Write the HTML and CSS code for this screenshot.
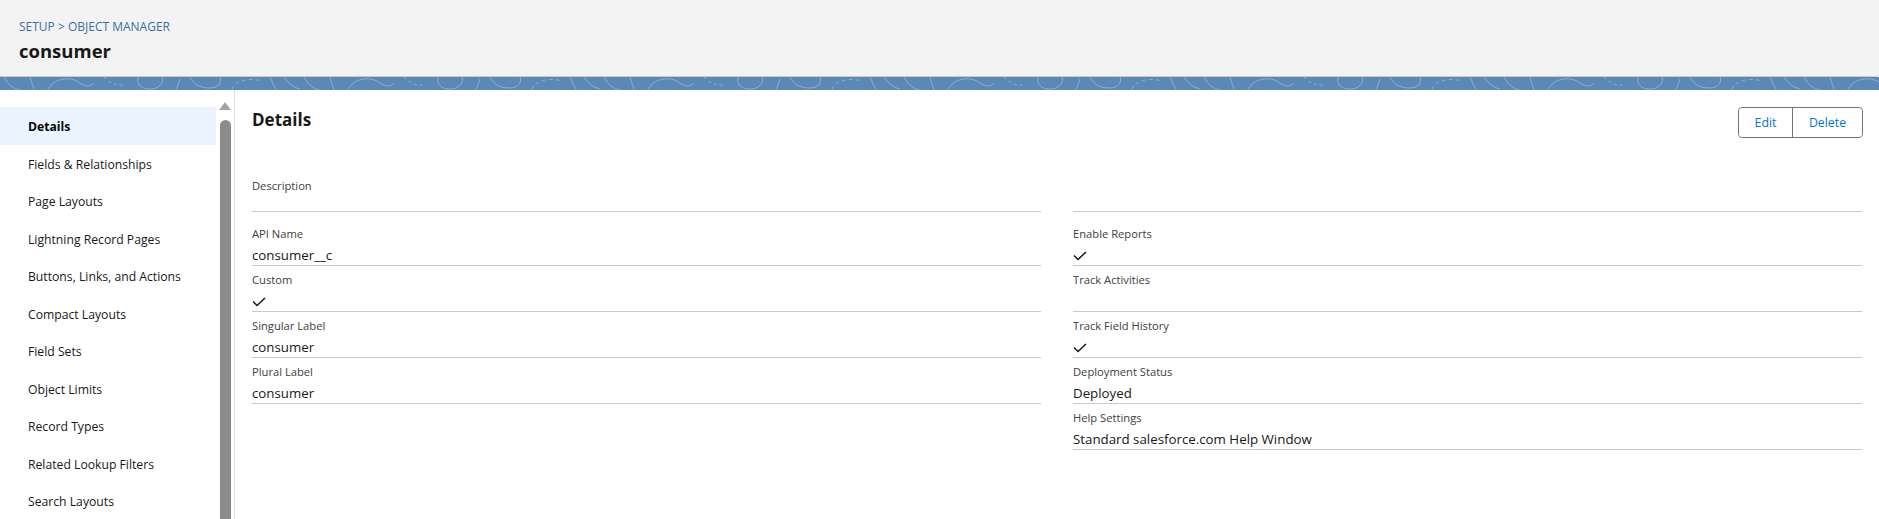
FILE: index.html
```html
<!DOCTYPE html>
<html lang="en">
<head>
<meta charset="utf-8">
<title>consumer | Object Manager</title>
<link rel="stylesheet" href="styles.css">
</head>
<body>
<header class="page-header">
  <div class="breadcrumb">SETUP &gt; OBJECT MANAGER</div>
  <h1 class="title">consumer</h1>
</header>
<div class="band">
  <svg class="band-art" width="100%" height="13" xmlns="http://www.w3.org/2000/svg">
    <defs>
      <pattern id="swirl" width="300" height="13" patternUnits="userSpaceOnUse">
        <rect width="300" height="13" fill="#5a88b8"/>
        <g fill="none" stroke="rgba(255,255,255,0.3)" stroke-width="1">
          <path d="M4 0 C 8 8, 14 12, 20 13"/>
          <path d="M30 0 L 34 13"/>
          <path d="M48 13 C 52 2, 70 -2, 80 6 C 86 10, 90 10, 94 6"/>
          <path d="M104 0 C 110 6, 116 9, 124 8" stroke-dasharray="3 3"/>
          <path d="M138 0 C 136 9, 144 13, 152 12 C 160 11, 164 5, 162 0"/>
          <path d="M176 13 L 180 2"/>
          <path d="M190 0 C 194 8, 200 11, 210 11 C 218 11, 222 6, 220 0"/>
          <path d="M232 13 C 234 4, 248 0, 262 4" stroke-dasharray="4 3"/>
          <path d="M270 0 L 276 13"/>
          <path d="M284 0 C 288 6, 292 10, 300 12"/>
        </g>
      </pattern>
    </defs>
    <rect width="100%" height="13" fill="url(#swirl)"/>
  </svg>
</div>
<div class="layout">
  <nav class="sidenav">
    <ul class="nav-list">
      <li class="nav-item active">Details</li>
      <li class="nav-item">Fields &amp; Relationships</li>
      <li class="nav-item">Page Layouts</li>
      <li class="nav-item">Lightning Record Pages</li>
      <li class="nav-item">Buttons, Links, and Actions</li>
      <li class="nav-item">Compact Layouts</li>
      <li class="nav-item">Field Sets</li>
      <li class="nav-item">Object Limits</li>
      <li class="nav-item">Record Types</li>
      <li class="nav-item">Related Lookup Filters</li>
      <li class="nav-item">Search Layouts</li>
    </ul>
    <div class="scrollbar">
      <div class="scroll-arrow"></div>
      <div class="scroll-thumb"></div>
    </div>
  </nav>
  <main class="content">
    <div class="content-head">
      <h2 class="section-title">Details</h2>
      <div class="btn-group">
        <button class="btn btn-edit" type="button">Edit</button>
        <button class="btn btn-delete" type="button">Delete</button>
      </div>
    </div>
    <div class="desc-row">
      <div class="field field-desc">
        <div class="field-label">Description</div>
        <div class="field-value"></div>
      </div>
      <div class="field field-desc"></div>
    </div>
    <div class="fields-grid">
      <div class="col">
        <div class="field">
          <div class="field-label">API Name</div>
          <div class="field-value">consumer__c</div>
        </div>
        <div class="field">
          <div class="field-label">Custom</div>
          <div class="field-value"><svg class="check" width="14" height="10" viewBox="0 0 14 10"><polyline points="1,4.5 5,8.5 13,1" fill="none" stroke="#181818" stroke-width="1.5"/></svg></div>
        </div>
        <div class="field">
          <div class="field-label">Singular Label</div>
          <div class="field-value">consumer</div>
        </div>
        <div class="field">
          <div class="field-label">Plural Label</div>
          <div class="field-value">consumer</div>
        </div>
      </div>
      <div class="col">
        <div class="field">
          <div class="field-label">Enable Reports</div>
          <div class="field-value"><svg class="check" width="14" height="10" viewBox="0 0 14 10"><polyline points="1,4.5 5,8.5 13,1" fill="none" stroke="#181818" stroke-width="1.5"/></svg></div>
        </div>
        <div class="field">
          <div class="field-label">Track Activities</div>
          <div class="field-value"></div>
        </div>
        <div class="field">
          <div class="field-label">Track Field History</div>
          <div class="field-value"><svg class="check" width="14" height="10" viewBox="0 0 14 10"><polyline points="1,4.5 5,8.5 13,1" fill="none" stroke="#181818" stroke-width="1.5"/></svg></div>
        </div>
        <div class="field">
          <div class="field-label">Deployment Status</div>
          <div class="field-value">Deployed</div>
        </div>
        <div class="field">
          <div class="field-label">Help Settings</div>
          <div class="field-value">Standard salesforce.com Help Window</div>
        </div>
      </div>
    </div>
  </main>
</div>
</body>
</html>
```

FILE: styles.css
```css
* { box-sizing: border-box; }

html, body {
  margin: 0;
  padding: 0;
  height: 100%;
  overflow: hidden;
  background: #ffffff;
  font-family: "Open Sans", "Noto Sans", Arial, sans-serif;
  color: #181818;
}

.page-header {
  height: 77px;
  background: #f3f3f3;
  border-bottom: 1px solid #c9c9c9;
  border-bottom-right-radius: 4px;
  padding: 19px 0 0 19px;
}

.breadcrumb {
  font-size: 12px;
  line-height: 16px;
  color: #3d6fa3;
}

.title {
  margin: 3px 0 0;
  font-size: 18.5px;
  line-height: 26px;
  font-weight: 700;
  color: #181818;
}

.band {
  height: 13px;
  line-height: 0;
  background: #5a88b8;
}

.band-art { display: block; }

.layout {
  display: flex;
  height: calc(100vh - 90px);
}

.sidenav {
  display: flex;
  width: 235px;
  flex: none;
  border-right: 1px solid #e1e1e1;
}

.nav-list {
  list-style: none;
  margin: 0;
  padding: 17px 0 0;
  width: 216px;
  flex: none;
}

.nav-item {
  height: 37.5px;
  padding-top: 2px;
  line-height: 35.5px;
  padding-left: 28px;
  font-size: 12.2px;
  color: #181818;
  white-space: nowrap;
}

.nav-item.active {
  background: #ebf3fe;
  font-weight: 700;
  color: #080707;
}

.scrollbar {
  width: 18px;
  flex: none;
  display: flex;
  flex-direction: column;
  padding-left: 3px;
}

.scroll-arrow {
  width: 0;
  height: 0;
  margin-top: 12px;
  border-left: 6.5px solid transparent;
  border-right: 6.5px solid transparent;
  border-bottom: 8px solid #a3a3a3;
}

.scroll-thumb {
  margin-top: 10px;
  margin-left: 1px;
  width: 11px;
  flex: 1;
  background: #8b8b8b;
  border-radius: 6px 6px 0 0;
}

.content {
  flex: 1;
  padding: 17px 17px 0 17px;
  min-width: 0;
}

.content-head {
  display: flex;
  justify-content: space-between;
  align-items: flex-start;
  height: 31px;
}

.section-title {
  margin: 0;
  font-size: 17px;
  line-height: 26px;
  font-weight: 700;
  color: #181818;
}

.btn-group {
  display: flex;
  border: 1px solid #747474;
  border-radius: 4px;
  height: 31px;
  margin-right: -1px;
}

.btn {
  background: #ffffff;
  border: 0;
  margin: 0;
  padding: 0;
  height: 29px;
  font-family: inherit;
  font-size: 12.3px;
  color: #0176d3;
  cursor: pointer;
}

.btn-edit {
  width: 54px;
  border-right: 1px solid #747474;
  border-radius: 4px 0 0 4px;
}

.btn-delete {
  width: 69px;
  border-radius: 0 4px 4px 0;
}

.desc-row {
  display: grid;
  grid-template-columns: 1fr 1fr;
  column-gap: 32px;
  margin-top: 34px;
}

.fields-grid {
  display: grid;
  grid-template-columns: 1fr 1fr;
  column-gap: 32px;
  margin-top: 8px;
  align-items: start;
}

.field {
  height: 46px;
  padding-top: 5px;
  border-bottom: 1px solid #c9c9c9;
}

.field-desc {
  height: 40px;
}

.field-label {
  font-size: 11.2px;
  line-height: 18px;
  color: #3e3e3c;
}

.field-value {
  margin-top: 2px;
  height: 21px;
  font-size: 13.3px;
  line-height: 21px;
  color: #181818;
  display: flex;
  align-items: center;
}

.check {
  display: block;
}
```
